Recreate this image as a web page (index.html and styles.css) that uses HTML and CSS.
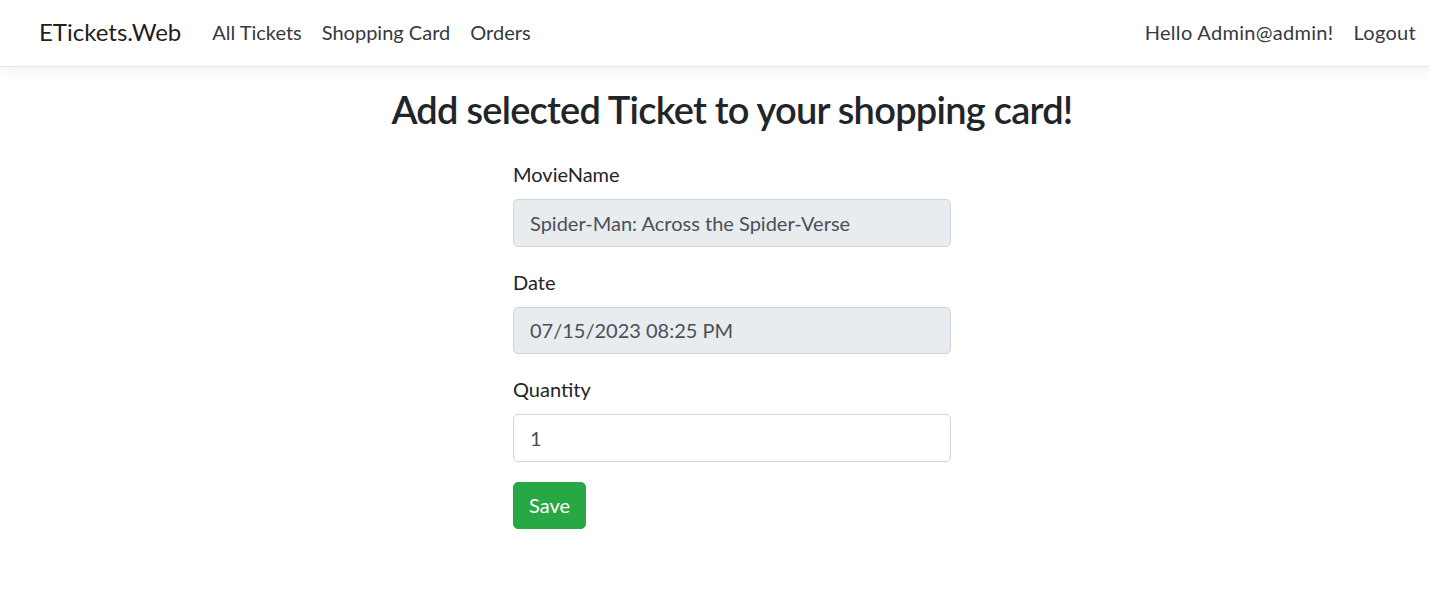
FILE: index.html
```html
<!DOCTYPE html>
<html lang="en">
<head>
<meta charset="utf-8">
<title>ETickets.Web</title>
<link rel="stylesheet" href="styles.css">
</head>
<body>
<div class="page">
  <header class="navbar">
    <a class="brand" href="#">ETickets.Web</a>
    <ul class="nav">
      <li><a class="nav-link" href="#">All Tickets</a></li>
      <li><a class="nav-link" href="#">Shopping Card</a></li>
      <li><a class="nav-link" href="#">Orders</a></li>
    </ul>
    <ul class="nav nav-right">
      <li><a class="nav-link" href="#">Hello Admin@admin!</a></li>
      <li><a class="nav-link" href="#">Logout</a></li>
    </ul>
  </header>
  <main class="main">
    <h2 class="title">Add selected Ticket to your shopping card!</h2>
    <form class="form">
      <div class="group">
        <label class="label">MovieName</label>
        <input class="control control-readonly" type="text" readonly value="Spider-Man: Across the Spider-Verse">
      </div>
      <div class="group">
        <label class="label">Date</label>
        <input class="control control-readonly" type="text" readonly value="07/15/2023 08:25 PM">
      </div>
      <div class="group">
        <label class="label">Quantity</label>
        <input class="control" type="text" value="1">
      </div>
      <button class="btn" type="button">Save</button>
    </form>
  </main>
</div>
</body>
</html>
```
FILE: styles.css
```css
html, body {
  margin: 0;
  padding: 0;
  overflow: hidden;
  background: #fff;
}
body {
  font-family: Lato, "Noto Sans", sans-serif;
  font-size: 20px;
  color: #212529;
}
.page {
  width: 1464px;
}
.navbar {
  height: 66px;
  display: flex;
  align-items: center;
  padding: 0 38px 0 39px;
  border-bottom: 1px solid #e3e3ea;
  box-shadow: 0 5px 15px rgba(0, 0, 0, 0.05);
  background: #fff;
}
.brand {
  font-size: 24px;
  color: rgba(0, 0, 0, 0.9);
  text-decoration: none;
  margin-right: 21px;
  line-height: 34px;
  padding-bottom: 2px;
}
.nav {
  display: flex;
  list-style: none;
  margin: 0;
  padding: 0 0 3px;
}
.nav-right {
  margin-left: auto;
}
.nav-link {
  display: block;
  padding: 0 10px;
  line-height: 30px;
  color: #343a40;
  text-decoration: none;
}
.nav-right .nav-link {
  letter-spacing: 0.3px;
}
.main {
  padding-top: 18px;
}
.title {
  margin: 0 0 26px;
  text-align: center;
  font-size: 38px;
  font-weight: 600;
  letter-spacing: -0.75px;
  line-height: 48px;
  color: #212529;
}
.form {
  width: 438px;
  margin: 0 auto;
}
.group {
  margin-bottom: 20px;
}
.label {
  display: block;
  line-height: 30px;
  margin-bottom: 10px;
}
.control {
  display: block;
  box-sizing: border-box;
  width: 100%;
  height: 47.5px;
  padding: 0 16px;
  font-family: inherit;
  font-size: 20px;
  color: #495057;
  background: #fff;
  border: 1px solid #ced4da;
  border-radius: 5px;
  outline: none;
}
.control-readonly {
  background: #e9ecef;
}
.btn {
  display: block;
  height: 47.5px;
  padding: 0 15px;
  font-family: inherit;
  font-size: 20px;
  color: #fff;
  background: #28a745;
  border: 1px solid #28a745;
  border-radius: 5px;
}
```
